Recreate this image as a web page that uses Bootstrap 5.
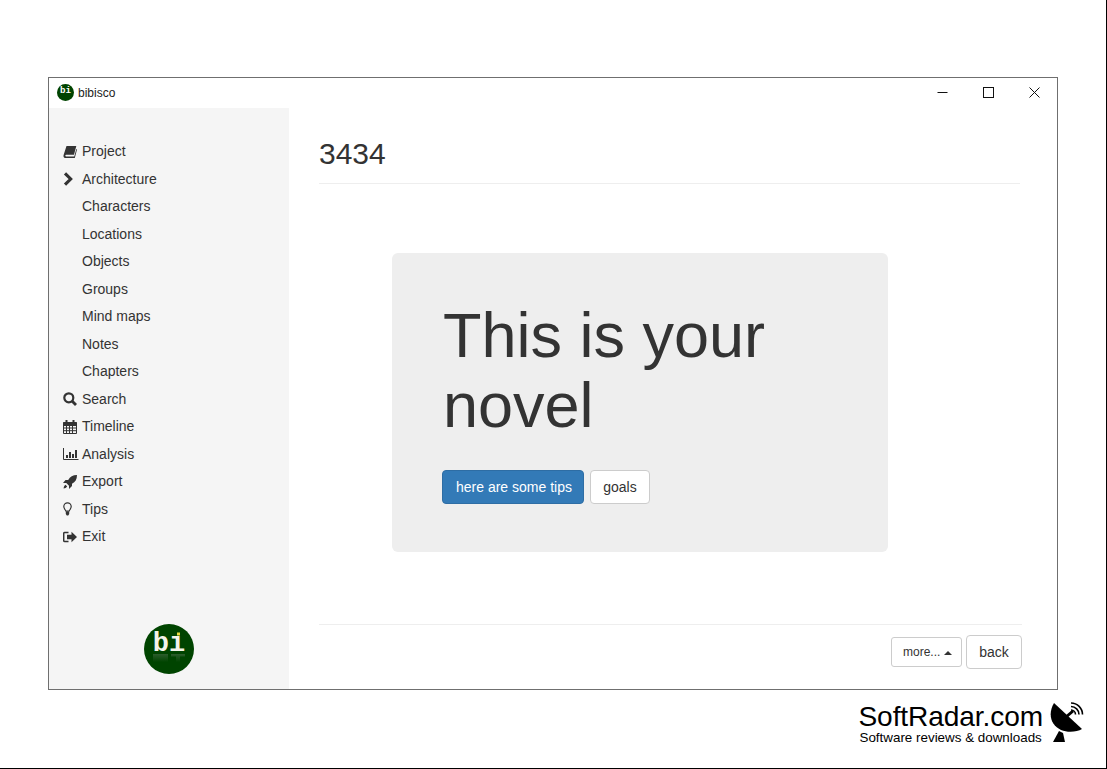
<!DOCTYPE html>
<html lang="en">
<head>
<meta charset="utf-8">
<title>bibisco</title>
<link rel="stylesheet" href="https://cdn.jsdelivr.net/npm/bootstrap@5.3.0/dist/css/bootstrap.min.css">
<style>
html,body{height:769px;overflow:hidden;}
body{font-family:"Liberation Sans",Arial,sans-serif;font-size:14px;color:#333;background:#fff;}
.stage{width:1107px;height:769px;border-right:1px solid #000;border-bottom:1px solid #000;padding:77px 0 0 48px;}
.appwin{width:1010px;height:613px;border:1px solid #6f6f6f;background:#fff;}
.titlebar{height:30px;padding-left:8px;font-size:12px;color:#222;}
.titleicon{margin-right:4px;margin-bottom:2px;}
.winbtn{width:46px;height:28px;padding-bottom:2px;}
.sidebar{width:240px;height:581px;background:#f5f5f5;padding:30px 0 0 14px;}
.navrow{height:27.5px;line-height:27.5px;color:#333;text-decoration:none;}
.navicon{width:19px;flex:none;}
.logowrap{margin-top:73.500px;padding-right:14px;}
.mainpane{padding:0 35px 0 30px;width:768px;}
.pagetitle{font-size:30px;line-height:33px;font-weight:400;margin:29px 2px 0 0;border-bottom:1px solid #eee;height:47px;color:#333;}
.hero{width:496px;height:299px;background:#eee;border-radius:6px;margin:69px 0 0 73px;padding:48px 50px;}
.herotext{font-size:63px;line-height:69.5px;font-weight:400;margin:0 0 30px;padding-left:1px;color:#333;}
.heroactions{gap:6px;}
.heroblue{background:#337ab7;border:1px solid #2e6da4;color:#fff;font-size:14px;height:34px;padding:0 11px 0 13px;line-height:32px;border-radius:4px;}
.herowhite{background:#fff;border:1px solid #ccc;color:#333;font-size:14px;height:34px;width:60px;padding:0;line-height:32px;border-radius:4px;}
.footline{border-top:1px solid #eee;margin-top:72px;padding-top:10px;}
.morebtn{background:#fff;border:1px solid #ccc;color:#333;font-size:12px;height:30px;width:71px;padding:0 0 0 11px;line-height:28px;border-radius:3px;text-align:left;}
.backbtn{background:#fff;border:1px solid #ccc;color:#333;font-size:14px;height:34px;width:56px;padding:0;line-height:32px;border-radius:4px;}
.caretup{display:inline-block;width:0;height:0;border-left:4px solid transparent;border-right:4px solid transparent;border-bottom:4px solid #333;vertical-align:middle;}
.wmark{width:1037px;margin-top:13px;color:#000;}
.wm1{font-size:28.1px;line-height:28px;letter-spacing:-.1px;}
.wm2{font-size:13.4px;line-height:13px;margin:0 0 0 1px;}
.dish{margin:-2px 0 0 6px;}
</style>
</head>
<body>
<div class="stage">
  <div class="appwin">
    <div class="titlebar d-flex align-items-center">
      <svg width="17" height="17" viewBox="0 0 50 50" class="titleicon"><circle cx="25" cy="25" r="25" fill="#004400"/><text x="25" y="27" text-anchor="middle" font-family="Liberation Mono" font-weight="700" font-size="27" fill="#fff">bi</text></svg>
      <span class="flex-grow-1">bibisco</span>
      <div class="winbtn d-flex align-items-center justify-content-center"><svg width="11" height="11" viewBox="0 0 11 11"><path d="M.5 5.500h10" stroke="#111" fill="none"/></svg></div>
      <div class="winbtn d-flex align-items-center justify-content-center"><svg width="11" height="11" viewBox="0 0 11 11"><rect x=".5" y=".5" width="10" height="10" stroke="#111" fill="none"/></svg></div>
      <div class="winbtn d-flex align-items-center justify-content-center"><svg width="11" height="11" viewBox="0 0 11 11"><path d="M.5.500l10 10M10.500.500l-10 10" stroke="#111" fill="none"/></svg></div>
    </div>
    <div class="d-flex">
      <div class="sidebar d-flex flex-column">
        <a class="navrow d-flex" href="#"><span class="navicon d-flex align-items-center"><svg width="14" height="14" viewBox="0 0 14 14"><path d="M3.500 1h9.800l-2.300 8.800H3.200c-1 0-1.300 1.600-.2 1.600h8.300l2-7.400.7.500-2.200 8.500H2.200C.7 13 .2 11.500.6 10z" fill="#333"/></svg></span><span>Project</span></a>
        <a class="navrow d-flex" href="#"><span class="navicon d-flex align-items-center"><svg width="10" height="14" viewBox="0 0 10 14"><path d="M2 1.300l5.700 5.700L2 12.700" stroke="#333" stroke-width="3.100" fill="none"/></svg></span><span>Architecture</span></a>
        <a class="navrow d-flex" href="#"><span class="navicon"></span><span>Characters</span></a>
        <a class="navrow d-flex" href="#"><span class="navicon"></span><span>Locations</span></a>
        <a class="navrow d-flex" href="#"><span class="navicon"></span><span>Objects</span></a>
        <a class="navrow d-flex" href="#"><span class="navicon"></span><span>Groups</span></a>
        <a class="navrow d-flex" href="#"><span class="navicon"></span><span>Mind maps</span></a>
        <a class="navrow d-flex" href="#"><span class="navicon"></span><span>Notes</span></a>
        <a class="navrow d-flex" href="#"><span class="navicon"></span><span>Chapters</span></a>
        <a class="navrow d-flex" href="#"><span class="navicon d-flex align-items-center"><svg width="14" height="14" viewBox="0 0 14 14"><circle cx="5.800" cy="5.800" r="4.500" stroke="#333" stroke-width="2.200" fill="none"/><path d="M9 9l4 4" stroke="#333" stroke-width="2.800"/></svg></span><span>Search</span></a>
        <a class="navrow d-flex" href="#"><span class="navicon d-flex align-items-center"><svg width="14" height="14" viewBox="0 0 14 14"><path d="M.5 2.500h13v11H.5zM.5 5.500h13M.5 8h13M.5 10.700h13M3.500 5.500v8M6.500 5.500v8M9.500 5.500v8" stroke="#333" fill="none"/><path d="M.5 2h13v3.500H.5z" fill="#333"/><path d="M3.500 0v3.500M10.500 0v3.500" stroke="#333" stroke-width="2"/></svg></span><span>Timeline</span></a>
        <a class="navrow d-flex" href="#"><span class="navicon d-flex align-items-center"><svg width="16" height="14" viewBox="0 0 16 14"><path d="M.5 1v11.500h15" stroke="#333" fill="none"/><path d="M3 8h2v3H3zM6 5h2v6H6zM9 7h2v4H9zM12 3h2v8h-2z" fill="#333"/></svg></span><span>Analysis</span></a>
        <a class="navrow d-flex" href="#"><span class="navicon d-flex align-items-center"><svg width="14" height="14" viewBox="0 0 14 14"><path d="M14 0c-4.300 0-6.800 1.600-8.800 5H2.500L0 8h3.300l2.700 2.700V14l3-3V8.800C12.300 7 14 4.500 14 0zM2.500 9.800C1.200 10.700.8 12 .6 13.400c1.400-.2 2.700-.7 3.600-2z" fill="#333"/></svg></span><span>Export</span></a>
        <a class="navrow d-flex" href="#"><span class="navicon d-flex align-items-center"><svg width="10" height="14" viewBox="0 0 10 14"><path d="M2.800 9C2.300 7.500.8 6.700.8 4.500a3.700 3.700 0 0 1 7.400 0C8.200 6.700 6.700 7.500 6.200 9z" stroke="#333" stroke-width="1.200" fill="none"/><path d="M2.800 9.300h3.400v2.700L5.200 13.500H3.800L2.800 12z" fill="#333"/></svg></span><span>Tips</span></a>
        <a class="navrow d-flex" href="#"><span class="navicon d-flex align-items-center"><svg width="14" height="14" viewBox="0 0 14 14"><path d="M5.500 2.500H1.700c-.6 0-1 .4-1 1v7c0 .6.4 1 1 1h3.800" stroke="#333" stroke-width="1.500" fill="none"/><path d="M4 4.800h4.500V1.800L14 7l-5.500 5.200V9.200H4z" fill="#333"/></svg></span><span>Exit</span></a>
        <div class="logowrap d-flex justify-content-center">
          <svg width="50" height="50" viewBox="0 0 50 50"><defs><linearGradient id="fade" x1="0" y1="0" x2="0" y2="1"><stop offset="0" stop-color="#2c5d2c"/><stop offset="1" stop-color="#004400"/></linearGradient></defs><circle cx="25" cy="25" r="25" fill="#004400"/><text x="25" y="27" text-anchor="middle" font-family="Liberation Mono" font-weight="700" font-size="27" fill="#f4f4ea">bi</text><rect x="30" y="7" width="7" height="5" fill="#004400"/><rect x="33" y="8.500" width="3" height="3" fill="#e8d840"/><path d="M9 30h15v8H9zM27 30h14v2.500h-5V38h-4v-5.500h-5z" fill="url(#fade)"/></svg>
        </div>
      </div>
      <div class="mainpane flex-grow-1">
        <h1 class="pagetitle">3434</h1>
        <div class="hero">
          <h2 class="herotext">This is your novel</h2>
          <div class="d-flex heroactions">
            <button class="btn heroblue" type="button">here are some tips</button>
            <button class="btn herowhite" type="button">goals</button>
          </div>
        </div>
        <div class="footline d-flex justify-content-end">
          <div class="d-flex align-items-center gap-1">
            <button class="btn morebtn" type="button">more... <span class="caretup"></span></button>
            <button class="btn backbtn" type="button">back</button>
          </div>
        </div>
      </div>
    </div>
  </div>
  <div class="wmark d-flex justify-content-end">
    <div class="d-flex">
      <div><div class="wm1">SoftRadar.com</div><div class="wm2">Software reviews &amp; downloads</div></div>
      <svg width="36" height="42" viewBox="0 0 36 42" class="dish"><path d="M5 2C-1 12 1 24 12 29c7 3 16 2 21-1z" fill="#000"/><path d="M10 30L4 41h12l-2-9z" fill="#000"/><path d="M16 15l7-6 2 2-7 6z" fill="#000"/><path d="M22 9a4.500 4.500 0 0 1 4.500 4.500M22 5.500a8 8 0 0 1 8 8M22 2a11.500 11.500 0 0 1 11.500 11.500" stroke="#000" stroke-width="1.600" fill="none"/></svg>
    </div>
  </div>
</div>
</body>
</html>
